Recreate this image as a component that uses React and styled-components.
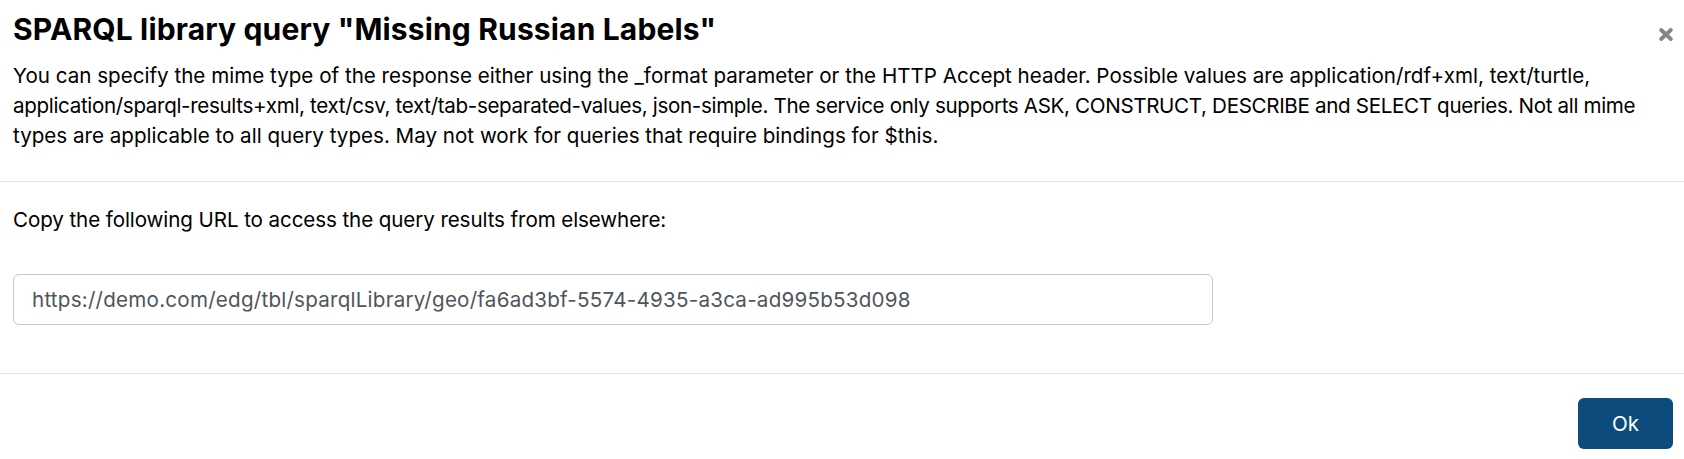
import React from "react";
import styled, { createGlobalStyle } from "styled-components";

const GlobalStyle = createGlobalStyle`
  html, body {
    margin: 0;
    padding: 0;
    background: #ffffff;
  }
  body {
    font-family: Inter, "Open Sans", "Liberation Sans", sans-serif;
    color: #000;
  }
`;

const Dialog = styled.div`
  width: 1684px;
  background: #fff;
  display: flex;
  flex-direction: column;
`;

const Header = styled.header`
  padding: 11px 11px 30px 13px;
  border-bottom: 1px solid #e2e2e2;
`;

const TitleRow = styled.div`
  display: flex;
  justify-content: space-between;
  align-items: flex-start;
  margin-bottom: 14px;
`;

const Title = styled.h1`
  margin: 0;
  font-size: 30px;
  line-height: 36px;
  font-weight: 700;
  letter-spacing: 0.15px;
  color: #000;
`;

const CloseButton = styled.button`
  border: 0;
  background: transparent;
  padding: 0;
  margin-top: 16px;
  width: 14px;
  height: 14px;
  display: flex;
  align-items: center;
  justify-content: center;
  cursor: pointer;
`;

const Description = styled.div`
  display: flex;
  flex-direction: column;
`;

const DescLine = styled.span`
  display: block;
  font-size: 20.6px;
  line-height: 30px;
  white-space: nowrap;
  letter-spacing: ${(p) => p.tracking || 0}px;
  color: #000;
`;

const Body = styled.section`
  padding: 23px 11px 48px 13px;
  border-bottom: 1px solid #e2e2e2;
  display: flex;
  flex-direction: column;
  gap: 39px;
`;

const Label = styled.p`
  margin: 0;
  font-size: 20.6px;
  line-height: 30px;
  letter-spacing: -0.1px;
  color: #000;
`;

const UrlInput = styled.input`
  box-sizing: border-box;
  width: 1200px;
  height: 51px;
  border: 1px solid #c6c6c6;
  border-radius: 6px;
  padding: 0 18px;
  font-family: inherit;
  font-size: 20.6px;
  letter-spacing: 0.23px;
  color: #50555b;
  background: #fff;
  outline: none;
`;

const Footer = styled.footer`
  display: flex;
  justify-content: flex-end;
  padding: 24px 11px 9px 13px;
`;

const OkButton = styled.button`
  width: 95px;
  height: 51px;
  border: 0;
  border-radius: 6px;
  background: #0c4b7b;
  color: #fff;
  font-family: inherit;
  font-size: 20.6px;
  cursor: pointer;
`;

const lines = [
  {
    text: "You can specify the mime type of the response either using the _format parameter or the HTTP Accept header. Possible values are application/rdf+xml, text/turtle,",
    tracking: 0,
  },
  {
    text: "application/sparql-results+xml, text/csv, text/tab-separated-values, json-simple. The service only supports ASK, CONSTRUCT, DESCRIBE and SELECT queries. Not all mime",
    tracking: -0.34,
  },
  {
    text: "types are applicable to all query types. May not work for queries that require bindings for $this.",
    tracking: 0,
  },
];

export default function App() {
  return (
    <>
      <GlobalStyle />
      <Dialog>
        <Header>
          <TitleRow>
            <Title>SPARQL library query "Missing Russian Labels"</Title>
            <CloseButton aria-label="Close">
              <svg width="14" height="13" viewBox="0 0 14 13">
                <path
                  d="M2.2 2 L11.8 11 M11.8 2 L2.2 11"
                  stroke="#858585"
                  strokeWidth="3.8"
                  strokeLinecap="round"
                />
              </svg>
            </CloseButton>
          </TitleRow>
          <Description>
            {lines.map((l, i) => (
              <DescLine key={i} tracking={l.tracking}>
                {l.text}
              </DescLine>
            ))}
          </Description>
        </Header>
        <Body>
          <Label>Copy the following URL to access the query results from elsewhere:</Label>
          <UrlInput
            readOnly
            value="https://demo.com/edg/tbl/sparqlLibrary/geo/fa6ad3bf-5574-4935-a3ca-ad995b53d098"
          />
        </Body>
        <Footer>
          <OkButton>Ok</OkButton>
        </Footer>
      </Dialog>
    </>
  );
}
